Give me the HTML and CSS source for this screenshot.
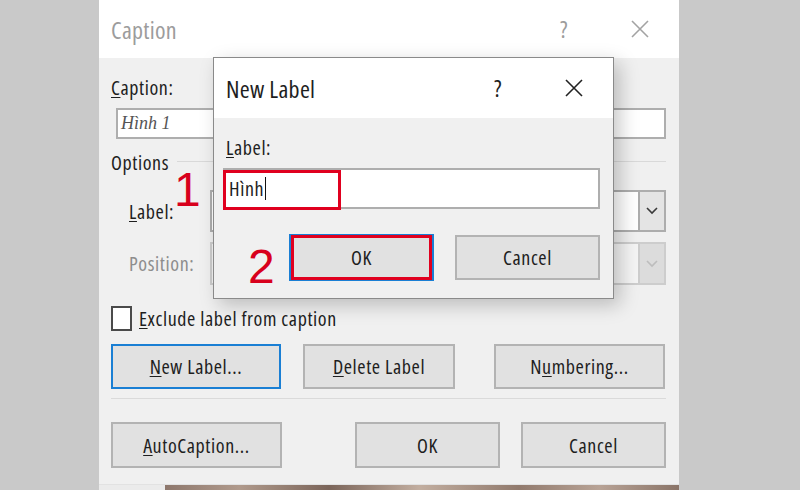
FILE: index.html
```html
<!DOCTYPE html>
<html lang="vi">
<head>
  <meta charset="UTF-8">
  <title>Caption - New Label</title>
  <link rel="stylesheet" href="styles.css">
</head>
<body>

  <div class="caption-dlg">
    <div class="titlebar">
      <span class="title">Caption</span>
      <span class="tb-btns">
        <span class="help">?</span>
        <svg class="close" width="18" height="18" viewBox="0 0 18 18"><path d="M1 1 L17 17 M17 1 L1 17"/></svg>
      </span>
    </div>

    <div class="dlg-body">
      <div class="field-label"><u>C</u>aption:</div>
      <div class="textbox caption-box">Hình 1</div>

      <div class="group-head"><span>Options</span><span class="rule"></span></div>

      <div class="opt-row">
        <span class="opt-label"><u>L</u>abel:</span>
        <div class="combo">
          <span class="combo-field"></span>
          <span class="combo-drop"><svg width="12" height="8" viewBox="0 0 12 8"><path d="M1 1 L6 6 L11 1"/></svg></span>
        </div>
      </div>
      <div class="opt-row disabled">
        <span class="opt-label">Position:</span>
        <div class="combo">
          <span class="combo-field"></span>
          <span class="combo-drop"><svg width="12" height="8" viewBox="0 0 12 8"><path d="M1 1 L6 6 L11 1"/></svg></span>
        </div>
      </div>

      <div class="check-row">
        <span class="checkbox"></span>
        <span><u>E</u>xclude label from caption</span>
      </div>

      <div class="btn-row">
        <button class="btn focused w-new"><u>N</u>ew Label...</button>
        <button class="btn w-del"><u>D</u>elete Label</button>
        <button class="btn w-num">N<u>u</u>mbering...</button>
      </div>

      <div class="sep"></div>

      <div class="btn-row bottom">
        <button class="btn w-auto"><u>A</u>utoCaption...</button>
        <button class="btn w-ok">OK</button>
        <button class="btn w-cancel">Cancel</button>
      </div>
    </div>
  </div>
  <div class="photo-strip"></div>

  <!-- New Label dialog on top -->
  <div class="newlabel-dlg">
    <div class="titlebar">
      <span class="title">New Label</span>
      <span class="tb-btns">
        <span class="help">?</span>
        <svg class="close" width="18" height="18" viewBox="0 0 18 18"><path d="M1 1 L17 17 M17 1 L1 17"/></svg>
      </span>
    </div>
    <div class="nl-body">
      <div class="field-label"><u>L</u>abel:</div>
      <div class="textbox nl-box">Hình<span class="caret"></span></div>
      <div class="nl-buttons">
        <button class="btn focused nl-ok">OK</button>
        <button class="btn nl-cancel">Cancel</button>
      </div>
    </div>
  </div>

  <!-- red step marks -->
  <div class="mark mark-box1"></div>
  <div class="mark mark-box2"></div>
  <div class="step step1">1</div>
  <div class="step step2">2</div>

</body>
</html>
```

FILE: styles.css
```css
* {
  box-sizing: border-box;
}
html, body {
  margin: 0;
}
body {
  width: 800px;
  height: 490px;
  overflow: hidden;
  position: relative;
  background: #c9c9c9;
  font-family: "Open Sans", "Noto Sans", sans-serif;
  font-stretch: 75%;
  font-size: 20px;
  letter-spacing: 0.6px;
  color: #1e1e1e;
}
u {
  text-decoration-thickness: 1px;
  text-underline-offset: 2px;
}

/* title bars */
.titlebar {
  display: flex;
  align-items: center;
  background: #fff;
  padding-left: 12px;
  padding-right: 30px;
}
.title {
  font-size: 24px;
  letter-spacing: 0.3px;
}
.tb-btns {
  margin-left: auto;
  display: flex;
  align-items: center;
  gap: 63px;
}
.help {
  font-size: 24px;
  line-height: 1;
}
.close path {
  stroke: #222;
  stroke-width: 1.6;
  fill: none;
}

/* Caption dialog */
.caption-dlg {
  margin-left: 99px;
  width: 580px;
  height: 485px;
  background: #f0f0f0;
  border-bottom: 1px solid #e2e2e2;
  display: flex;
  flex-direction: column;
}
.caption-dlg .titlebar {
  height: 58px;
}
.caption-dlg .title,
.caption-dlg .help {
  color: #9c9c9c;
}
.caption-dlg .close path {
  stroke: #a3a3a3;
}
.dlg-body {
  padding: 0 13px 0 12px;
}
.field-label {
  line-height: 22px;
  margin-top: 19px;
}
.textbox {
  background: #fff;
  border: 2px solid #aeaeae;
  display: flex;
  align-items: center;
}
.caption-box {
  margin: 9px 0 0 5px;
  height: 31px;
  padding-left: 3px;
  font-family: "Liberation Serif", serif;
  font-style: italic;
  font-stretch: normal;
  letter-spacing: 0;
  font-size: 18px;
  color: #555;
}
.group-head {
  display: flex;
  align-items: center;
  height: 24px;
  margin-top: 11px;
}
.group-head .rule {
  flex: 1;
  height: 1px;
  background: #d9d9d9;
  margin-left: 8px;
  margin-top: -2px;
}
.opt-row {
  display: flex;
  align-items: center;
  height: 42px;
  margin-top: 16px;
}
.opt-row.disabled {
  height: 43px;
  margin-top: 10px;
}
.opt-label {
  width: 99px;
  padding-left: 18px;
}
.combo {
  flex: 1;
  height: 100%;
  display: flex;
  border: 2px solid #adadad;
}
.combo-field {
  flex: 1;
  background: #fff;
}
.combo-drop {
  width: 26px;
  background: #e4e4e4;
  border-left: 2px solid #adadad;
  display: flex;
  align-items: center;
  justify-content: center;
}
.combo-drop path {
  stroke: #3a3a3a;
  stroke-width: 1.6;
  fill: none;
}
.disabled .opt-label {
  color: #8d8d8d;
}
.disabled .combo {
  border-color: #cdcdcd;
}
.disabled .combo-field {
  background: #f4f4f4;
}
.disabled .combo-drop {
  background: #dcdcdc;
  border-left-color: #cdcdcd;
}
.disabled .combo-drop path {
  stroke: #bdbdbd;
}
.check-row {
  display: flex;
  align-items: center;
  gap: 7px;
  margin-top: 21px;
  height: 25px;
}
.checkbox {
  width: 21px;
  height: 25px;
  background: #fff;
  border: 2px solid #4a4a4a;
}

/* buttons */
.btn {
  font: inherit;
  letter-spacing: inherit;
  color: #1e1e1e;
  background: #e1e1e1;
  border: 2px solid #b3b3b3;
  padding: 0;
}
.btn.focused {
  border-color: #1a7fd4;
}
.btn-row {
  display: flex;
  height: 45px;
  margin-top: 13px;
}
.btn-row.bottom {
  height: 46px;
  margin-top: 23px;
}
.w-new { width: 170px; }
.w-del { width: 152px; margin-left: 22px; }
.w-num { width: 171px; margin-left: 39px; }
.w-auto { width: 171px; }
.w-ok { width: 145px; margin-left: auto; }
.w-cancel { width: 145px; margin-left: 21px; }
.sep {
  height: 1px;
  background: #dadada;
  margin-top: 9px;
}

.photo-strip {
  margin-left: 99px;
  width: 580px;
  height: 5px;
  background: linear-gradient(to right, #ebebeb 0 66px, #8d776c 66px, #b09a8c 140px, #7b655a 230px, #c2aea0 320px, #917a6d 420px, #b8a396 500px, #8a7468);
}

/* New Label dialog */
.newlabel-dlg {
  position: absolute;
  left: 213px;
  top: 57px;
  width: 401px;
  height: 242px;
  background: #f0f0f0;
  border: 1px solid #8a8a8a;
  box-shadow: 6px 6px 18px rgba(0, 0, 0, 0.22);
}
.newlabel-dlg .titlebar {
  height: 60px;
  padding-right: 30px;
}
.nl-body {
  padding-left: 9px;
}
.nl-body .field-label {
  margin-left: 3px;
  margin-top: 19px;
}
.nl-box {
  margin-top: 9px;
  width: 377px;
  height: 41px;
  padding-left: 4px;
}
.caret {
  width: 1px;
  height: 23px;
  background: #111;
  margin-left: 1px;
}
.nl-buttons {
  display: flex;
  justify-content: flex-end;
  gap: 21px;
  padding-right: 13px;
  margin-top: 25px;
}
.nl-ok {
  width: 145px;
  height: 47px;
}
.nl-cancel {
  width: 145px;
  height: 45px;
  margin-top: 1px;
}

/* annotations */
.mark {
  position: absolute;
  border: 3px solid #e0001f;
}
.mark-box1 {
  left: 223px;
  top: 170px;
  width: 118px;
  height: 40px;
}
.mark-box2 {
  left: 291px;
  top: 235px;
  width: 141px;
  height: 45px;
}
.step {
  position: absolute;
  font-family: "Liberation Sans", Arial, sans-serif;
  font-stretch: normal;
  letter-spacing: 0;
  font-size: 48px;
  line-height: 48px;
  color: #d8001c;
}
.step1 {
  left: 174px;
  top: 166px;
}
.step2 {
  left: 248px;
  top: 243px;
}
```
